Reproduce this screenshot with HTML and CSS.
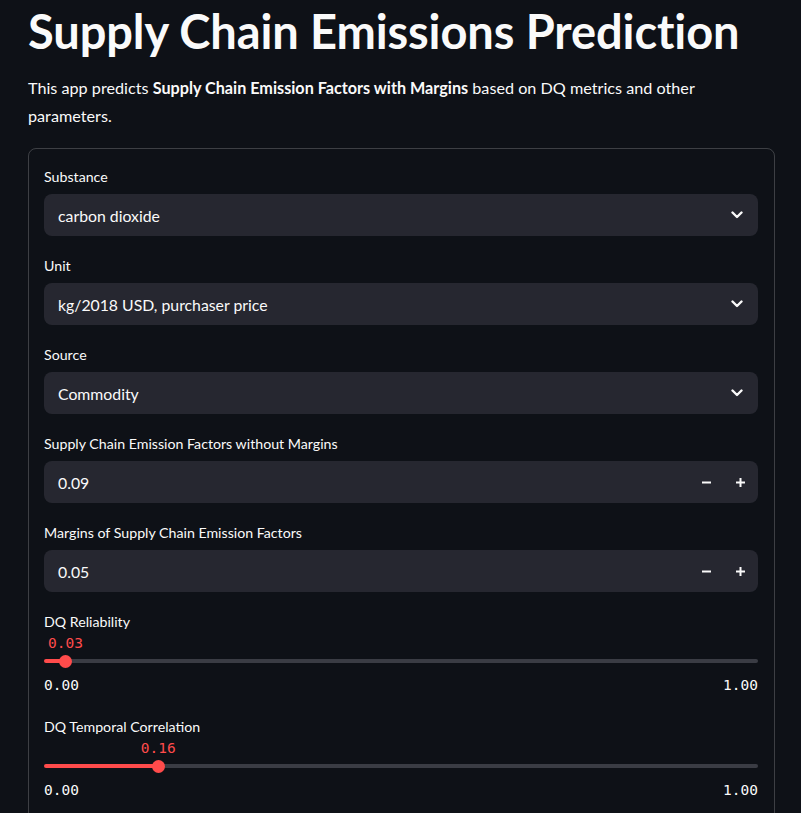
FILE: index.html
```html
<!DOCTYPE html>
<html>
<head>
<meta charset="utf-8">
<link rel="stylesheet" href="styles.css">
</head>
<body>
<main class="main">
  <h1 class="title">Supply Chain Emissions Prediction</h1>
  <p class="intro">This app predicts <strong>Supply Chain Emission Factors with Margins</strong> based on DQ metrics and other parameters.</p>
  <form class="form">
    <div class="field">
      <label class="label">Substance</label>
      <div class="select">
        <span class="value">carbon dioxide</span>
        <svg class="chev" width="12" height="8" viewBox="0 0 12 8"><path d="M1.5 1.5 L6 6 L10.5 1.5" fill="none" stroke="#fafafa" stroke-width="2.4" stroke-linecap="round" stroke-linejoin="round"/></svg>
      </div>
    </div>
    <div class="field">
      <label class="label">Unit</label>
      <div class="select">
        <span class="value">kg/2018 USD, purchaser price</span>
        <svg class="chev" width="12" height="8" viewBox="0 0 12 8"><path d="M1.5 1.5 L6 6 L10.5 1.5" fill="none" stroke="#fafafa" stroke-width="2.4" stroke-linecap="round" stroke-linejoin="round"/></svg>
      </div>
    </div>
    <div class="field">
      <label class="label">Source</label>
      <div class="select">
        <span class="value">Commodity</span>
        <svg class="chev" width="12" height="8" viewBox="0 0 12 8"><path d="M1.5 1.5 L6 6 L10.5 1.5" fill="none" stroke="#fafafa" stroke-width="2.4" stroke-linecap="round" stroke-linejoin="round"/></svg>
      </div>
    </div>
    <div class="field">
      <label class="label">Supply Chain Emission Factors without Margins</label>
      <div class="number">
        <span class="value">0.09</span>
        <div class="steps">
          <svg class="step" width="11" height="11" viewBox="0 0 11 11"><path d="M1 5.5 H10" stroke="#fafafa" stroke-width="2"/></svg>
          <svg class="step" width="11" height="11" viewBox="0 0 11 11"><path d="M1 5.5 H10 M5.5 1 V10" stroke="#fafafa" stroke-width="2"/></svg>
        </div>
      </div>
    </div>
    <div class="field">
      <label class="label">Margins of Supply Chain Emission Factors</label>
      <div class="number">
        <span class="value">0.05</span>
        <div class="steps">
          <svg class="step" width="11" height="11" viewBox="0 0 11 11"><path d="M1 5.5 H10" stroke="#fafafa" stroke-width="2"/></svg>
          <svg class="step" width="11" height="11" viewBox="0 0 11 11"><path d="M1 5.5 H10 M5.5 1 V10" stroke="#fafafa" stroke-width="2"/></svg>
        </div>
      </div>
    </div>
    <div class="field slider-field">
      <label class="label">DQ Reliability</label>
      <div class="slider">
        <div class="track" style="--pos: 3%">
          <span class="thumb-value">0.03</span>
          <span class="thumb"></span>
        </div>
      </div>
      <div class="ticks"><span>0.00</span><span>1.00</span></div>
    </div>
    <div class="field slider-field">
      <label class="label">DQ Temporal Correlation</label>
      <div class="slider">
        <div class="track" style="--pos: 16%">
          <span class="thumb-value">0.16</span>
          <span class="thumb"></span>
        </div>
      </div>
      <div class="ticks"><span>0.00</span><span>1.00</span></div>
    </div>
  </form>
</main>
</body>
</html>
```
FILE: styles.css
```css
* { box-sizing: border-box; }
html, body {
  margin: 0;
  padding: 0;
  background: #0e1117;
  color: #fafafa;
  font-family: Lato, "Noto Sans", sans-serif;
}
.main {
  padding: 0 26px 0 28px;
  display: flex;
  flex-direction: column;
}
.title {
  margin: 0;
  padding-top: 4px;
  font-size: 47px;
  line-height: 54px;
  font-weight: 700;
  letter-spacing: -0.1px;
}
.intro {
  margin: 16px 0 0 0;
  font-size: 16.2px;
  line-height: 28px;
}
.intro strong { font-weight: 700; }
.form {
  margin-top: 18px;
  border: 1px solid rgba(250, 250, 250, 0.2);
  border-radius: 8px;
  padding: 18px 16px 0 15px;
  display: flex;
  flex-direction: column;
  gap: 20px;
  min-height: 700px;
}
.field {
  display: flex;
  flex-direction: column;
}
.label {
  font-size: 14.2px;
  line-height: 20px;
  height: 20px;
  margin-bottom: 7px;
}
.select, .number {
  height: 42px;
  background: #262730;
  border-radius: 8px;
  display: flex;
  align-items: center;
  justify-content: space-between;
  padding: 0 15px 0 14px;
}
.number { padding-right: 12px; }
.value {
  font-size: 15.8px;
}
.steps {
  display: flex;
  gap: 23px;
  align-items: center;
}
.slider-field { padding-bottom: 2px; }
.slider-field .label { margin-bottom: 0; }
.slider {
  height: 40px;
  display: flex;
  align-items: flex-end;
  padding-bottom: 9px;
}
.track {
  position: relative;
  width: 100%;
  height: 4px;
  border-radius: 2px;
  background: linear-gradient(to right, #ff4b4b 0, #ff4b4b var(--pos), #3a3c44 var(--pos), #3a3c44 100%);
}
.thumb {
  position: absolute;
  left: var(--pos);
  top: 50%;
  width: 13px;
  height: 13px;
  margin-left: -6.5px;
  margin-top: -6.5px;
  background: #ff4b4b;
  border-radius: 50%;
}
.thumb-value {
  position: absolute;
  left: var(--pos);
  bottom: 11px;
  transform: translateX(-50%);
  color: #ff4b4b;
  font-family: "DejaVu Sans Mono", monospace;
  font-size: 14.5px;
  line-height: 18px;
  white-space: nowrap;
}
.ticks {
  display: flex;
  justify-content: space-between;
  font-family: "DejaVu Sans Mono", monospace;
  font-size: 14.5px;
  line-height: 20px;
  margin-top: 3px;
}
```
